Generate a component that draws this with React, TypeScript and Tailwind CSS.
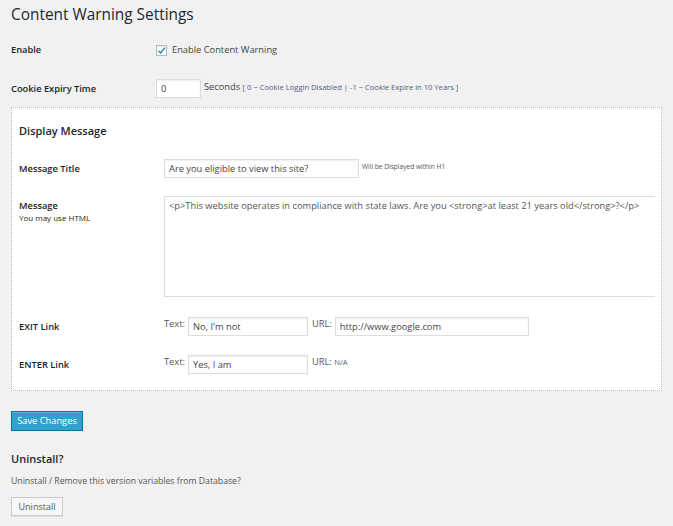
import React from 'react'

const font = "font-['Open_Sans','Liberation_Sans',sans-serif]"

function Label({ children }: { children: React.ReactNode }) {
  return <div className="w-[145px] shrink-0 text-[9.3px] font-semibold text-[#222]">{children}</div>
}

function TextInput({ value, className }: { value: string; className: string }) {
  return (
    <input
      readOnly
      value={value}
      className={`h-[19px] border border-[#ddd] bg-white px-[4px] text-[9.3px] text-[#444] outline-none shadow-[inset_0_1px_2px_rgba(0,0,0,0.07)] ${className}`}
    />
  )
}

export default function App() {
  return (
    <div className={`min-h-screen bg-[#f1f1f1] pl-[11px] pt-[5px] ${font}`}>
      <h2 className="text-[15.4px] leading-[20px] text-[#23282d]">Content Warning Settings</h2>

      {/* Enable */}
      <div className="mt-[15px] flex h-[20px] items-center">
        <Label>Enable</Label>
        <div className="flex items-center gap-[5px]">
          <span className="flex h-[11px] w-[11px] items-center justify-center border border-[#b4b9be] bg-white shadow-[inset_0_1px_2px_rgba(0,0,0,0.1)]">
            <svg viewBox="0 0 10 10" className="h-[9px] w-[9px]">
              <path d="M1.5 5.2 L4 7.6 L8.6 2" fill="none" stroke="#1e8cbe" strokeWidth="1.6" />
            </svg>
          </span>
          <span className="text-[9.3px] text-[#444]">Enable Content Warning</span>
        </div>
      </div>

      {/* Cookie */}
      <div className="mt-[19px] flex h-[19px] items-center">
        <Label>Cookie Expiry Time</Label>
        <TextInput value="0" className="w-[45px]" />
        <span className="ml-[3px] -mt-[3px] text-[9.3px] text-[#444]">
          Seconds{' '}
          <span className="text-[7.6px] text-[#50607a]">[ 0 − Cookie Loggin Disabled | -1 − Cookie Expire in 10 Years ]</span>
        </span>
      </div>

      {/* Display Message box */}
      <div className="mt-[9px] h-[284px] w-[651px] border border-dotted border-[#bbb] bg-white pl-[7px] pt-[15px]">
        <h3 className="text-[11px] font-semibold leading-[16px] text-[#23282d]">Display Message</h3>

        <div className="mt-[20px] flex h-[19px] items-center">
          <Label>Message Title</Label>
          <TextInput value="Are you eligible to view this site?" className="w-[195px]" />
          <span className="ml-[3px] self-start pt-[3px] text-[6.6px] text-[#555]">Will be Displayed within H1</span>
        </div>

        <div className="mt-[18px] flex">
          <div className="w-[145px] shrink-0 pt-[4px]">
            <div className="text-[9.3px] font-semibold leading-[12px] text-[#222]">Message</div>
            <div className="text-[8px] leading-[11px] text-[#222]">You may use HTML</div>
          </div>
          <div className="w-[491px] overflow-hidden">
            <textarea
              readOnly
              value="<p>This website operates in compliance with state laws. Are you <strong>at least 21 years old</strong>?</p>"
              className="block h-[101px] w-[520px] resize-none border border-[#ddd] bg-white px-[4px] py-[3px] text-[9.3px] leading-[12px] text-[#555] outline-none"
            />
          </div>
        </div>

        <div className="mt-[20px] flex h-[19px] items-center">
          <Label>EXIT Link</Label>
          <span className="self-start text-[9.3px] text-[#555]">Text:</span>
          <TextInput value="No, I'm not" className="ml-[3px] w-[120px]" />
          <span className="ml-[4px] self-start text-[9.3px] text-[#555]">URL:</span>
          <TextInput value="http://www.google.com" className="ml-[3px] w-[194px]" />
        </div>

        <div className="mt-[19px] flex h-[19px] items-center">
          <Label>ENTER Link</Label>
          <span className="self-start text-[9.3px] text-[#555]">Text:</span>
          <TextInput value="Yes, I am" className="ml-[3px] w-[120px]" />
          <span className="ml-[4px] self-start text-[9.3px] text-[#555]">
            URL: <span className="text-[7.6px] text-[#50607a]">N/A</span>
          </span>
        </div>
      </div>

      <button className="mt-[20px] flex h-[20px] w-[72px] items-center justify-center border border-[#0074a2] bg-[#2ea2cc] text-[9.3px] text-white shadow-[inset_0_1px_0_rgba(120,200,230,0.5)]">
        Save Changes
      </button>

      <h3 className="mt-[20px] text-[11px] font-semibold leading-[16px] text-[#23282d]">Uninstall?</h3>
      <p className="mt-[7px] text-[8.7px] leading-[14px] text-[#555]">Uninstall / Remove this version variables from Database?</p>
      <button className="mt-[9px] flex h-[19px] w-[52px] items-center justify-center border border-[#ccc] bg-[#f7f7f7] text-[9px] text-[#555] shadow-[0_1px_0_rgba(0,0,0,0.08)]">
        Uninstall
      </button>
    </div>
  )
}
